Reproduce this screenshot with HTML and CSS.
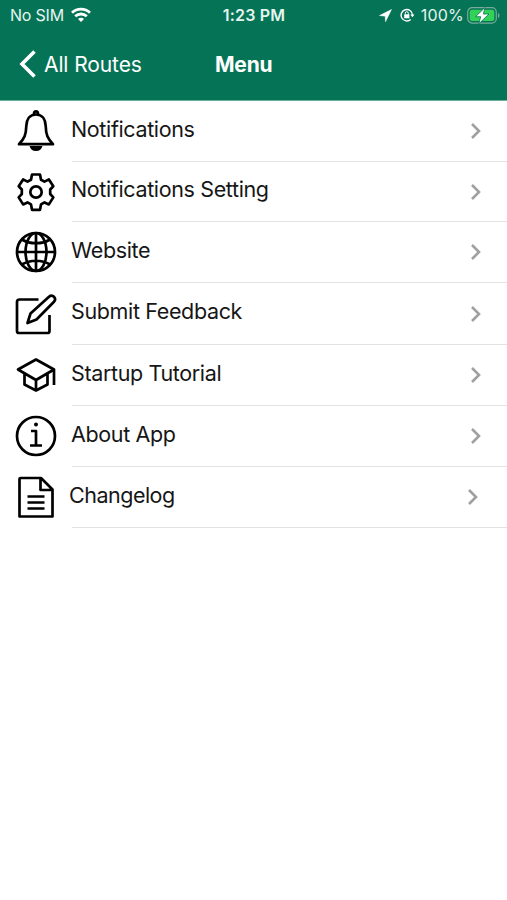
FILE: index.html
```
<!doctype html>
<html lang="en">
<head>
  <meta charset="UTF-8">
  <title>Menu</title>
  <link rel="stylesheet" href="styles.css">
</head>
<body>
  <header class="header">
    <div class="status-bar">
      <div class="status-left">
        <span class="carrier">No SIM</span>
        <svg class="wifi" width="20" height="16" viewBox="0 0 20 16" fill="none" stroke="#fff" stroke-width="2.8">
          <path d="M1 5.7C6 .9 14 .9 19 5.7M4.200 9.300c3.300-3.100 8.300-3.100 11.600 0"/>
          <path d="M10 15l-3-3c1.600-1.600 4.400-1.600 6 0z" fill="#fff" stroke="none"/>
        </svg>
      </div>
      <span class="time">1:23 PM</span>
      <div class="status-right">
        <svg width="13" height="13" viewBox="0 0 13 13"><path d="M12.500.5L.5 6.500l5.700.7.3 5.500z" fill="#fff" stroke="#fff" stroke-width=".5" stroke-linejoin="round"/></svg>
        <svg class="lock" width="15" height="14" viewBox="0 0 15 14" fill="none" stroke="#fff" stroke-width="1.4">
          <path d="M12.5 7.2A5.7 5.7 0 1 0 10.7 11.4"/>
          <path d="M10.3 6.5h4.2l-2.1 2.8z" fill="#fff" stroke="none"/>
          <path d="M4.2 6.3h5.2v4H4.2z" fill="#fff" stroke="none"/>
          <path d="M5.3 6.5V5.2a1.5 1.5 0 0 1 3 0v1.3" stroke-width="1"/>
        </svg>
        <span class="percent">100%</span>
        <svg class="battery" width="33" height="17" viewBox="0 0 33 17">
          <rect x=".7" y=".7" width="28.6" height="15.4" rx="4.5" fill="none" stroke="#79aa9a" stroke-width="1.2"/>
          <path d="M31 6v5c2-.8 2-4.2 0-5z" fill="#79aa9a"/>
          <rect x="2.7" y="2.7" width="24.6" height="11.4" rx="2.5" fill="#32d158"/>
          <path d="M18 .5L8.500 9.700h5.200L11.800 16.800 22 7h-5.600z" fill="#fff" stroke="#057356" stroke-width=".8"/>
        </svg>
      </div>
    </div>
    <nav class="nav-bar">
      <a class="back">
        <svg width="17" height="28" viewBox="0 0 17 28" fill="none" stroke="#fff" stroke-width="3.6"><path d="M15.500 1.500L3 14l12.500 12.500"/></svg>
        <span>All Routes</span>
      </a>
      <h1 class="title">Menu</h1>
    </nav>
  </header>
  <ul class="list">
    <li class="item">
      <svg class="icon" viewBox="0 0 42 42">
        <path d="M14.500 36h13c-.8 3-3 5-6.500 5s-5.700-2-6.500-5z" fill="#000" stroke="none"/>
        <path d="M21 4.500c-6.500 0-9.500 5-9.700 11.500C11 25 9.500 28.500 4 34.200h34c-5.500-5.700-7-9.200-7.300-18.200C30.500 9.500 27.500 4.500 21 4.500z"/>
        <path d="M19 4c0-3.500 4-3.500 4 0" />
      </svg>
      <span class="item-desc">Notifications</span>
      <svg class="arrow" viewBox="0 0 12 18"><path d="M2 2l7 7-7 7"/></svg>
    </li>
    <li class="item item-short">
      <svg class="icon" viewBox="0 0 42 42">
        <path d="M17 3.500h8l1 5.200 3.500 1.900 4.400-2.200 4.400 6.900-3.100 3.200v4.500l3.100 3.400-4.400 7-4.400-2-3.500 2-1 5.400h-8l-1-5.400-3.500-2-4.400 2-4.400-7L6.800 23v-4.500l-3.100-3.200 4.400-6.900 4.400 2.200L16 8.700z"/>
        <circle cx="21" cy="21" r="5.700"/>
      </svg>
      <span class="item-desc">Notifications Setting</span>
      <svg class="arrow" viewBox="0 0 12 18"><path d="M2 2l7 7-7 7"/></svg>
    </li>
    <li class="item">
      <svg class="icon" viewBox="0 0 42 42">
        <circle cx="21" cy="21" r="19"/>
        <ellipse cx="21" cy="21" rx="10.5" ry="19"/>
        <path d="M21 2v38M2 21h38M7 8.500c8 5 20 5 28 0M7 33.500c8-5 20-5 28 0"/>
      </svg>
      <span class="item-desc">Website</span>
      <svg class="arrow" viewBox="0 0 12 18"><path d="M2 2l7 7-7 7"/></svg>
    </li>
    <li class="item item-tall">
      <svg class="icon" viewBox="0 0 42 42">
        <path d="M23.500 6.500H4.500q-2.500 0-2.500 2.500v29q0 2 2 2h28.500q2 0 2-2V22"/>
        <path d="M12.500 30l3-9.500L34 3.700c3.500-2.900 8 1.500 5 5L21.500 26.500z"/>
      </svg>
      <span class="item-desc">Submit Feedback</span>
      <svg class="arrow" viewBox="0 0 12 18"><path d="M2 2l7 7-7 7"/></svg>
    </li>
    <li class="item">
      <svg class="icon" viewBox="0 0 42 42">
        <path d="M21 5.500l18 10L21 26 3 15.500zM9.500 19.500v11L21 36.500l11.500-6v-11M21 26v10M39 15.500V31"/>
      </svg>
      <span class="item-desc">Startup Tutorial</span>
      <svg class="arrow" viewBox="0 0 12 18"><path d="M2 2l7 7-7 7"/></svg>
    </li>
    <li class="item">
      <svg class="icon" viewBox="0 0 42 42">
        <circle cx="21" cy="21" r="19"/>
        <path d="M16 16h5v14M15 30.500h12"/>
        <circle cx="21" cy="9.500" r="2" fill="#000" stroke="none"/>
      </svg>
      <span class="item-desc">About App</span>
      <svg class="arrow" viewBox="0 0 12 18"><path d="M2 2l7 7-7 7"/></svg>
    </li>
    <li class="item">
      <svg class="icon" viewBox="0 0 42 42">
        <path d="M5.500 2H26l11.500 11.500V40.500h-33V3q0-1 1-1zM25.500 2v12h12M12.500 20.500h17M12.500 26.500h17M12.500 32.500h17"/>
      </svg>
      <span class="item-desc changelog">Changelog</span>
      <svg class="arrow arrow-last" viewBox="0 0 12 18"><path d="M2 2l7 7-7 7"/></svg>
    </li>
  </ul>
</body>
</html>
```
FILE: styles.css
```
body {
  margin: 0;
  background: #fff;
  color: #161616;
  font-family: Inter, "Liberation Sans", sans-serif;
}

.header {
  box-sizing: border-box;
  height: 101px;
  background: #057356;
  border-bottom: 1px solid #6aaf9a;
  color: #fff;
}

.status-bar {
  display: grid;
  grid-template-columns: 1fr auto 1fr;
  align-items: center;
  height: 30px;
  padding: 0 7px 0 10px;
  font-size: 16px;
  color: #e6f5ef;
}

.status-left,
.status-right {
  display: flex;
  align-items: center;
}

.status-right {
  justify-content: flex-end;
}

.carrier {
  letter-spacing: -0.2px;
}

.wifi {
  margin-left: 7px;
}

.time {
  font-weight: 600;
  letter-spacing: 0.2px;
  margin-left: -2px;
}

.lock {
  margin: 0 6px 0 8px;
}

.percent {
  letter-spacing: 0.2px;
}

.battery {
  margin-left: 3px;
}

.nav-bar {
  display: grid;
  grid-template-columns: 215px auto;
  align-items: center;
  height: 68px;
}

.back {
  display: flex;
  align-items: center;
  gap: 8px;
  padding-left: 19px;
  font-size: 21px;
  letter-spacing: -0.1px;
}

.title {
  margin: 0;
  font-size: 21px;
  font-weight: 700;
  letter-spacing: -0.2px;
}

.list {
  list-style: none;
  padding: 0;
  margin: 0;
}

.item {
  display: flex;
  align-items: center;
  box-sizing: border-box;
  height: 61px;
  padding: 0 25px 1px 15px;
  /* divider starts after the icon column */
  background: linear-gradient(#e2e2e2, #e2e2e2) 72px 100% / 100% 1px no-repeat;
}

.item-short {
  height: 60px;
}

.item-tall {
  height: 62px;
}

.icon {
  width: 42px;
  height: 42px;
  margin-right: 14px;
  fill: none;
  stroke: #000;
  stroke-width: 2.7;
  stroke-linejoin: round;
}

.item-desc {
  font-size: 21.5px;
  line-height: 26px;
  letter-spacing: -0.36px;
  padding-bottom: 5px;
}

.changelog {
  margin-left: -2px;
  letter-spacing: -0.5px;
}

.arrow {
  width: 12px;
  height: 18px;
  margin-left: auto;
  fill: none;
  stroke: #a0a0a0;
  stroke-width: 2.6;
}

.arrow-last {
  margin-right: 3px;
}
```
